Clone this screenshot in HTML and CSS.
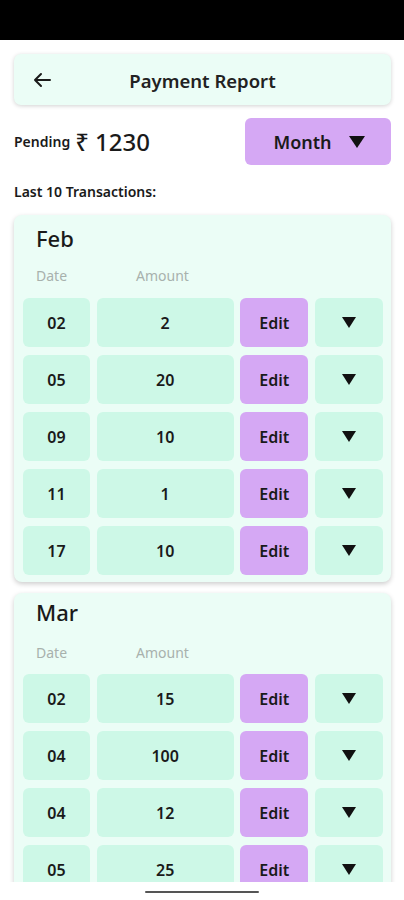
FILE: index.html
```html
<!DOCTYPE html>
<html lang="en">
<head>
    <meta charset="UTF-8">
    <meta name="viewport" content="width=device-width, initial-scale=1.0">
    <title>Payment Report</title>
    <link rel="stylesheet" href="styles.css">
</head>
<body>
    <div class="status-bar"></div>

    <div class="screen">
        <div class="header">
            <svg class="back" width="20" height="16" viewBox="0 0 20 16">
                <path d="M18 8H3M9 2L3 8l6 6" fill="none" stroke="#1b1b1b" stroke-width="2" stroke-linecap="round" stroke-linejoin="round"/>
            </svg>
            <h1>Payment Report</h1>
        </div>

        <div class="summary">
            <p class="pending"><span class="pending-label">Pending</span> <span class="pending-amount">₹ 1230</span></p>
            <button class="month-btn">Month
                <svg width="16" height="12" viewBox="0 0 16 12"><path d="M0 0h16L8 12z" fill="#111"/></svg>
            </button>
        </div>

        <p class="list-label">Last 10 Transactions:</p>

        <div class="month-card">
            <h2>Feb</h2>
            <div class="col-heads"><span>Date</span><span>Amount</span></div>
            <div class="row"><div class="cell">02</div><div class="cell">2</div><div class="cell edit">Edit</div><div class="cell"><svg width="14" height="11" viewBox="0 0 14 11"><path d="M0 0h14L7 11z" fill="#111"/></svg></div></div>
            <div class="row"><div class="cell">05</div><div class="cell">20</div><div class="cell edit">Edit</div><div class="cell"><svg width="14" height="11" viewBox="0 0 14 11"><path d="M0 0h14L7 11z" fill="#111"/></svg></div></div>
            <div class="row"><div class="cell">09</div><div class="cell">10</div><div class="cell edit">Edit</div><div class="cell"><svg width="14" height="11" viewBox="0 0 14 11"><path d="M0 0h14L7 11z" fill="#111"/></svg></div></div>
            <div class="row"><div class="cell">11</div><div class="cell">1</div><div class="cell edit">Edit</div><div class="cell"><svg width="14" height="11" viewBox="0 0 14 11"><path d="M0 0h14L7 11z" fill="#111"/></svg></div></div>
            <div class="row"><div class="cell">17</div><div class="cell">10</div><div class="cell edit">Edit</div><div class="cell"><svg width="14" height="11" viewBox="0 0 14 11"><path d="M0 0h14L7 11z" fill="#111"/></svg></div></div>
        </div>

        <div class="month-card">
            <h2>Mar</h2>
            <div class="col-heads"><span>Date</span><span>Amount</span></div>
            <div class="row"><div class="cell">02</div><div class="cell">15</div><div class="cell edit">Edit</div><div class="cell"><svg width="14" height="11" viewBox="0 0 14 11"><path d="M0 0h14L7 11z" fill="#111"/></svg></div></div>
            <div class="row"><div class="cell">04</div><div class="cell">100</div><div class="cell edit">Edit</div><div class="cell"><svg width="14" height="11" viewBox="0 0 14 11"><path d="M0 0h14L7 11z" fill="#111"/></svg></div></div>
            <div class="row"><div class="cell">04</div><div class="cell">12</div><div class="cell edit">Edit</div><div class="cell"><svg width="14" height="11" viewBox="0 0 14 11"><path d="M0 0h14L7 11z" fill="#111"/></svg></div></div>
            <div class="row"><div class="cell">05</div><div class="cell">25</div><div class="cell edit">Edit</div><div class="cell"><svg width="14" height="11" viewBox="0 0 14 11"><path d="M0 0h14L7 11z" fill="#111"/></svg></div></div>
        </div>
    </div>

    <div class="nav-bar"><div class="handle"></div></div>
</body>
</html>
```

FILE: styles.css
```css
body {
    font-family: "Noto Sans", "Open Sans", sans-serif;
    margin: 0;
    padding: 0;
    background-color: #fff;
    color: #1a1a1a;
}

.status-bar {
    height: 40px;
    background-color: #000;
}

.screen {
    height: 842px;
    overflow: hidden;
    padding: 0 13px 0 14px;
}

.header {
    display: flex;
    align-items: center;
    margin-top: 14px;
    height: 51px;
    background-color: #ebfdf6;
    border-radius: 7px;
    box-shadow: 0 1px 4px rgba(0, 0, 0, 0.18);
}

.header .back {
    margin-left: 18px;
}

.header h1 {
    flex: 1;
    margin: 2px 38px 0 0;
    text-align: center;
    font-size: 18.5px;
    font-weight: 600;
    color: #222;
}

.summary {
    display: flex;
    justify-content: space-between;
    align-items: center;
    margin-top: 13px;
}

.pending {
    margin: 0;
    display: flex;
    align-items: center;
    gap: 5px;
}

.pending-label {
    font-size: 14px;
    font-weight: 600;
}

.pending-amount {
    font-size: 24px;
    font-weight: 500;
}

.month-btn {
    width: 146px;
    height: 47px;
    border: none;
    border-radius: 6px;
    background-color: #d5a8f4;
    font-family: inherit;
    font-size: 18px;
    font-weight: 600;
    color: #1a1a1a;
    display: flex;
    align-items: center;
    justify-content: center;
    gap: 17px;
    padding: 0 0 0 2px;
}

.list-label {
    margin: 17px 0 0;
    font-size: 14px;
    font-weight: 600;
    line-height: 20px;
}

.month-card {
    margin-top: 13px;
    padding: 8px 8px 7px 9px;
    background-color: #ebfdf6;
    border-radius: 8px;
    box-shadow: 0 2px 5px rgba(0, 0, 0, 0.2);
}

.month-card h2 {
    margin: 0 0 0 13px;
    font-size: 22px;
    font-weight: 500;
    line-height: 30px;
}

.col-heads {
    display: flex;
    margin: 13px 0 12px 13px;
    font-size: 14px;
    line-height: 20px;
    color: #a8b1ad;
}

.col-heads span:first-child {
    width: 100px;
}

.month-card + .month-card {
    margin-top: 11px;
    padding-top: 4px;
}

.month-card + .month-card .col-heads {
    margin: 16px 0 11px 13px;
}

.row {
    display: grid;
    grid-template-columns: 67px 137px 68px 68px;
    column-gap: 6.67px;
    margin-bottom: 8px;
}

.row:last-child {
    margin-bottom: 0;
}

.cell {
    height: 49px;
    display: flex;
    align-items: center;
    justify-content: center;
    background-color: #cdf8e7;
    border-radius: 6px;
    font-size: 16px;
    font-weight: 600;
}

.cell.edit {
    background-color: #d5a8f4;
}

.nav-bar {
    height: 18px;
    background-color: #fff;
    display: flex;
    justify-content: center;
    padding-top: 9px;
    box-sizing: border-box;
}

.handle {
    width: 114px;
    height: 2px;
    background-color: #555;
    border-radius: 1px;
}
```
